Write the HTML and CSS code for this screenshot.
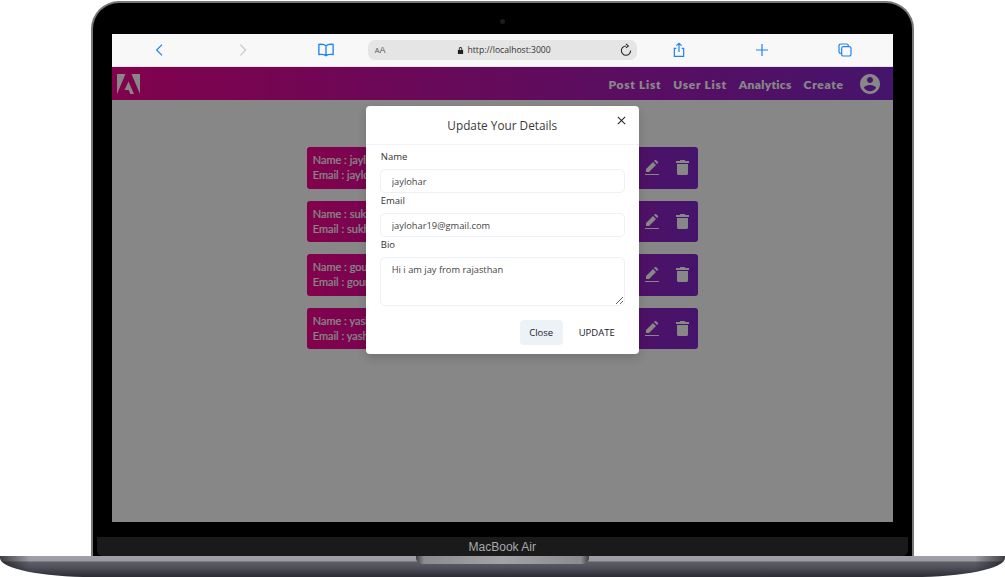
FILE: index.html
```html
<!DOCTYPE html>
<html lang="en">
<head>
  <meta charset="UTF-8">
  <title>Update Your Details</title>
  <link rel="stylesheet" href="styles.css">
</head>
<body>
  <div class="laptop">
    <div class="lid">
      <div class="camera-row"><span class="camera"></span></div>
      <div class="screen">
        <div class="browser-bar">
          <div class="bar-group">
            <svg class="bar-icon" viewBox="0 0 24 24"><path d="M15 4l-8 8 8 8" /></svg>
            <svg class="bar-icon bar-icon-off" viewBox="0 0 24 24"><path d="M8 4l8 8-8 8" /></svg>
            <svg class="bar-icon bar-icon-wide" viewBox="0 0 24 24"><path d="M12 6.500c-2-2-5-2.500-9.500-2v13.500c4.500-.5 7.500 0 9.500 1.500 2-1.500 5-2 9.500-1.500V4.500c-4.500-.5-7.500 0-9.500 2zM12 6.500v13" /></svg>
          </div>
          <div class="url-pill">
            <span class="aa"><small>A</small>A</span>
            <span class="url">
              <svg class="lock" viewBox="0 0 12 14"><path d="M3 6V4a3 3 0 0 1 6 0v2h1.500v7h-9V6zm1.500 0h3V4a1.500 1.500 0 0 0-3 0z" /></svg>
              http://localhost:3000
            </span>
            <svg class="reload" viewBox="0 0 24 24"><path d="M12 5a8 8 0 1 0 8 8M12 1.500l4 3.500-4 3.500" /></svg>
          </div>
          <div class="bar-group">
            <svg class="bar-icon" viewBox="0 0 24 24"><path d="M8 9.500H5v12h14v-12h-3M12 15V2M8 5.500L12 2l4 3.500" /></svg>
            <svg class="bar-icon" viewBox="0 0 24 24"><path d="M12 3v18M3 12h18" /></svg>
            <svg class="bar-icon" viewBox="0 0 24 24"><path d="M7 17H5.500A2.500 2.500 0 0 1 3 14.500v-9A2.500 2.500 0 0 1 5.500 3h9A2.500 2.500 0 0 1 17 5.500V7M9.500 7h9A2.500 2.500 0 0 1 21 9.500v9a2.500 2.500 0 0 1-2.500 2.500h-9A2.500 2.500 0 0 1 7 18.500v-9A2.500 2.500 0 0 1 9.500 7z" /></svg>
          </div>
        </div>

        <div class="app">
          <nav class="navbar">
            <svg class="logo" viewBox="0 0 23 20">
              <polygon points="0,0 8.500,0 0,20" />
              <polygon points="14.500,0 23,0 23,20" />
              <polygon points="11.500,7.500 17,20 13.300,20 11.700,16 7.500,16" />
            </svg>
            <div class="nav-links">
              <a>Post List</a>
              <a>User List</a>
              <a>Analytics</a>
              <a>Create</a>
            </div>
            <svg class="avatar" viewBox="0 0 24 24"><path d="M12 2C6.480 2 2 6.480 2 12s4.480 10 10 10 10-4.480 10-10S17.520 2 12 2zm0 3c1.660 0 3 1.340 3 3s-1.340 3-3 3-3-1.340-3-3 1.340-3 3-3zm0 14.200c-2.500 0-4.710-1.280-6-3.220.030-1.990 4-3.080 6-3.080 1.990 0 5.970 1.090 6 3.080-1.290 1.940-3.500 3.220-6 3.220z" /></svg>
          </nav>

          <div class="user-list">
            <div class="user-card">
              <div class="user-info"><p>Name : jaylohar</p><p>Email : jaylohar19@gmail.com</p></div>
              <div class="user-actions">
                <svg class="edit" viewBox="0 0 14 15"><path d="M0 14h14v1H0zM1 12V9l7-7 3 3-7 7zM9 1l1-1c.3-.3.7-.3 1 0l2 2c.3.3.3.7 0 1l-1 1z" /></svg>
                <svg class="trash" viewBox="0 0 13 15"><path d="M4 1V0h5v1h4v2H0V1zM1 4h11v9.500c0 .8-.7 1.500-1.500 1.500h-8C1.700 15 1 14.300 1 13.500z" /></svg>
              </div>
            </div>
            <div class="user-card">
              <div class="user-info"><p>Name : sukhdev</p><p>Email : sukhdev@gmail.com</p></div>
              <div class="user-actions">
                <svg class="edit" viewBox="0 0 14 15"><path d="M0 14h14v1H0zM1 12V9l7-7 3 3-7 7zM9 1l1-1c.3-.3.7-.3 1 0l2 2c.3.3.3.7 0 1l-1 1z" /></svg>
                <svg class="trash" viewBox="0 0 13 15"><path d="M4 1V0h5v1h4v2H0V1zM1 4h11v9.500c0 .8-.7 1.500-1.500 1.500h-8C1.700 15 1 14.300 1 13.500z" /></svg>
              </div>
            </div>
            <div class="user-card">
              <div class="user-info"><p>Name : gourav</p><p>Email : gourav@gmail.com</p></div>
              <div class="user-actions">
                <svg class="edit" viewBox="0 0 14 15"><path d="M0 14h14v1H0zM1 12V9l7-7 3 3-7 7zM9 1l1-1c.3-.3.7-.3 1 0l2 2c.3.3.3.7 0 1l-1 1z" /></svg>
                <svg class="trash" viewBox="0 0 13 15"><path d="M4 1V0h5v1h4v2H0V1zM1 4h11v9.500c0 .8-.7 1.500-1.500 1.500h-8C1.700 15 1 14.300 1 13.500z" /></svg>
              </div>
            </div>
            <div class="user-card">
              <div class="user-info"><p>Name : yash</p><p>Email : yash@gmail.com</p></div>
              <div class="user-actions">
                <svg class="edit" viewBox="0 0 14 15"><path d="M0 14h14v1H0zM1 12V9l7-7 3 3-7 7zM9 1l1-1c.3-.3.7-.3 1 0l2 2c.3.3.3.7 0 1l-1 1z" /></svg>
                <svg class="trash" viewBox="0 0 13 15"><path d="M4 1V0h5v1h4v2H0V1zM1 4h11v9.500c0 .8-.7 1.500-1.500 1.500h-8C1.700 15 1 14.300 1 13.500z" /></svg>
              </div>
            </div>
          </div>

          <div class="overlay">
            <div class="modal">
              <div class="modal-header">
                <h2>Update Your Details</h2>
                <svg class="modal-close" viewBox="0 0 12 12"><path d="M2 2l8 8M10 2l-8 8" /></svg>
              </div>
              <form class="modal-body">
                <label>Name</label>
                <input type="text" value="jaylohar">
                <label>Email</label>
                <input type="text" value="jaylohar19@gmail.com">
                <label>Bio</label>
                <textarea>Hi i am jay from rajasthan</textarea>
              </form>
              <div class="modal-footer">
                <button class="btn btn-close" type="button">Close</button>
                <button class="btn" type="button">UPDATE</button>
              </div>
            </div>
          </div>
        </div>
      </div>
      <div class="chin-black"></div>
      <div class="chin">MacBook Air</div>
    </div>
    <div class="base"><div class="notch"></div></div>
  </div>
</body>
</html>
```

FILE: styles.css
```css
html, body {
  margin: 0;
  padding: 0;
  overflow: hidden;
  background: #fff;
  font-family: "Open Sans", sans-serif;
}
.laptop {
  display: flex;
  flex-direction: column;
  align-items: center;
  width: 1005px;
  height: 577px;
  overflow: hidden;
}
.lid {
  box-sizing: border-box;
  width: 823px;
  height: 555px;
  margin-top: 1px;
  margin-left: -0.5px;
  padding: 0 19px;
  display: flex;
  flex-direction: column;
  background: #000;
  border: 2px solid #77777c;
  border-bottom: 0;
  border-radius: 28px 28px 0 0;
}
.camera-row {
  height: 31px;
  display: flex;
  align-items: center;
  justify-content: center;
  padding-top: 5px;
  box-sizing: border-box;
}
.camera {
  width: 5px;
  height: 5px;
  border-radius: 50%;
  background: #1c1c20;
}
.screen {
  height: 488px;
  display: flex;
  flex-direction: column;
  background: #fff;
}
.chin-black {
  height: 15px;
}
.chin {
  height: 19px;
  margin: 0 -15px;
  background: #1a1a1b;
  border-radius: 0 0 6px 6px;
  color: #a9a9ab;
  font: 12px/20px "Liberation Sans", sans-serif;
  text-align: center;
}

/* safari bar */
.browser-bar {
  height: 32px;
  flex: none;
  display: flex;
  align-items: center;
  gap: 30px;
  padding-left: 36px;
  background: #f8f8f8;
  border-bottom: 1px solid #e6e6e6;
}
.bar-group {
  display: flex;
  gap: 59px;
}
.bar-icon {
  width: 16px;
  height: 16px;
  margin: 0 4px;
  fill: none;
  stroke: #1f83f5;
  stroke-width: 1.800;
}
.bar-icon-off {
  stroke: #c8c8c8;
}
.bar-icon-wide {
  width: 18px;
  height: 18px;
  margin: -1px 3px;
}
.url-pill {
  box-sizing: border-box;
  width: 269px;
  height: 20px;
  display: flex;
  align-items: center;
  padding: 0 4px 0 7px;
  background: #e5e5e5;
  border-radius: 7px;
  color: #333;
  font-size: 8.600px;
}
.aa {
  font: 9px "Liberation Sans", sans-serif;
  color: #555;
}
.aa small {
  font-size: 7px;
}
.url {
  flex: 1;
  display: flex;
  align-items: center;
  justify-content: center;
  gap: 4px;
  padding-left: 3px;
}
.lock {
  width: 7px;
  height: 9px;
  fill: #222;
}
.reload {
  width: 14px;
  height: 14px;
  fill: none;
  stroke: #222;
  stroke-width: 1.800;
}

/* app */
.app {
  position: relative;
  flex: 1;
  background: #fff;
}
.navbar {
  height: 33px;
  display: flex;
  align-items: center;
  padding: 0 11px 0 5px;
  background: linear-gradient(90deg, #f50490, #8326cc);
}
.logo {
  width: 23px;
  height: 20px;
  fill: #fff;
}
.nav-links {
  margin-left: auto;
  display: flex;
  gap: 12px;
  padding-top: 2px;
  font: 800 12px "Lato", sans-serif;
  letter-spacing: 0.700px;
  color: #fff;
}
.nav-links a:nth-child(3) {
  letter-spacing: 0.300px;
}
.avatar {
  width: 24px;
  height: 24px;
  margin-left: 14px;
  fill: #fff;
}
.user-list {
  width: 391px;
  margin: 47px auto 0;
  display: flex;
  flex-direction: column;
  gap: 12px;
}
.user-card {
  height: 41.500px;
  display: flex;
  align-items: center;
  justify-content: space-between;
  padding: 0 9px 0 6px;
  box-sizing: border-box;
  background: linear-gradient(90deg, #f80390, #8326cc);
  border-radius: 3px;
  color: #fff;
}
.user-info {
  padding-bottom: 1px;
}
.user-info p {
  margin: 0;
  font: 400 11px/15px "Lato", sans-serif;
  -webkit-text-stroke: 0.200px #fff;
}
.user-actions {
  display: flex;
  align-items: center;
  gap: 17px;
}
.edit {
  width: 14px;
  height: 15px;
  fill: #fff;
}
.trash {
  width: 13px;
  height: 15px;
  fill: #fff;
}

/* modal */
.overlay {
  position: absolute;
  inset: 0;
  display: flex;
  justify-content: center;
  align-items: flex-start;
  padding-top: 39px;
  background: rgba(0, 0, 0, 0.47);
}
.modal {
  width: 273px;
  height: 248px;
  display: flex;
  flex-direction: column;
  background: #fff;
  border-radius: 4px;
  box-shadow: 0 4px 10px rgba(0, 0, 0, 0.15);
}
.modal-header {
  position: relative;
  height: 38px;
  flex: none;
  display: flex;
  align-items: center;
  justify-content: center;
  border-bottom: 1px solid #f1f3f7;
}
.modal-header h2 {
  margin: 0;
  font-size: 11.800px;
  font-weight: 500;
  color: #3a3a3a;
}
.modal-close {
  position: absolute;
  top: 9px;
  right: 12px;
  width: 11px;
  height: 11px;
  fill: none;
  stroke: #222;
  stroke-width: 1.100;
}
.modal-body {
  display: flex;
  flex-direction: column;
  padding: 4px 14px 0 14px;
}
.modal-body label {
  height: 20px;
  padding-left: 1px;
  box-sizing: border-box;
  font-size: 9.500px;
  line-height: 16px;
  color: #333;
}
.modal-body input, .modal-body textarea {
  box-sizing: border-box;
  width: 245px;
  padding: 0 11px;
  border: 1px solid #edf0f6;
  border-radius: 5px;
  background: #fff;
  font-family: "Open Sans", sans-serif;
  font-size: 9.300px;
  color: #444;
  outline: none;
}
.modal-body input {
  height: 24px;
}
.modal-body textarea {
  height: 49px;
  padding-top: 5px;
}
.modal-footer {
  display: flex;
  justify-content: flex-end;
  align-items: center;
  margin-top: 14px;
  padding-right: 8px;
}
.btn {
  height: 25px;
  padding: 0 16px;
  border: 0;
  border-radius: 4px;
  background: transparent;
  font-family: "Open Sans", sans-serif;
  font-size: 9.500px;
  color: #1a202c;
}
.btn-close {
  width: 43px;
  padding: 0;
  background: #edf2f7;
}

/* bottom of the laptop */
.base {
  flex: none;
  width: 1005px;
  height: 21px;
  display: flex;
  justify-content: center;
  background:
    linear-gradient(90deg, rgba(20,20,24,0.7) 0, rgba(20,20,24,0) 30px, rgba(20,20,24,0) 975px, rgba(20,20,24,0.7) 100%),
    linear-gradient(180deg, #a0a0a6 0, #9a9aa0 5px, #5d5e67 6px, #50515a 11px, #2b2c34 21px);
  border-radius: 0 0 92px 92px / 0 0 19px 19px;
}
.notch {
  width: 173px;
  height: 8px;
  background: linear-gradient(90deg, #3f3f44 0, #8b8b90 8px, #a2a2a7 50%, #8b8b90 165px, #3f3f44 100%);
  border-radius: 0 0 6px 6px;
}
```
